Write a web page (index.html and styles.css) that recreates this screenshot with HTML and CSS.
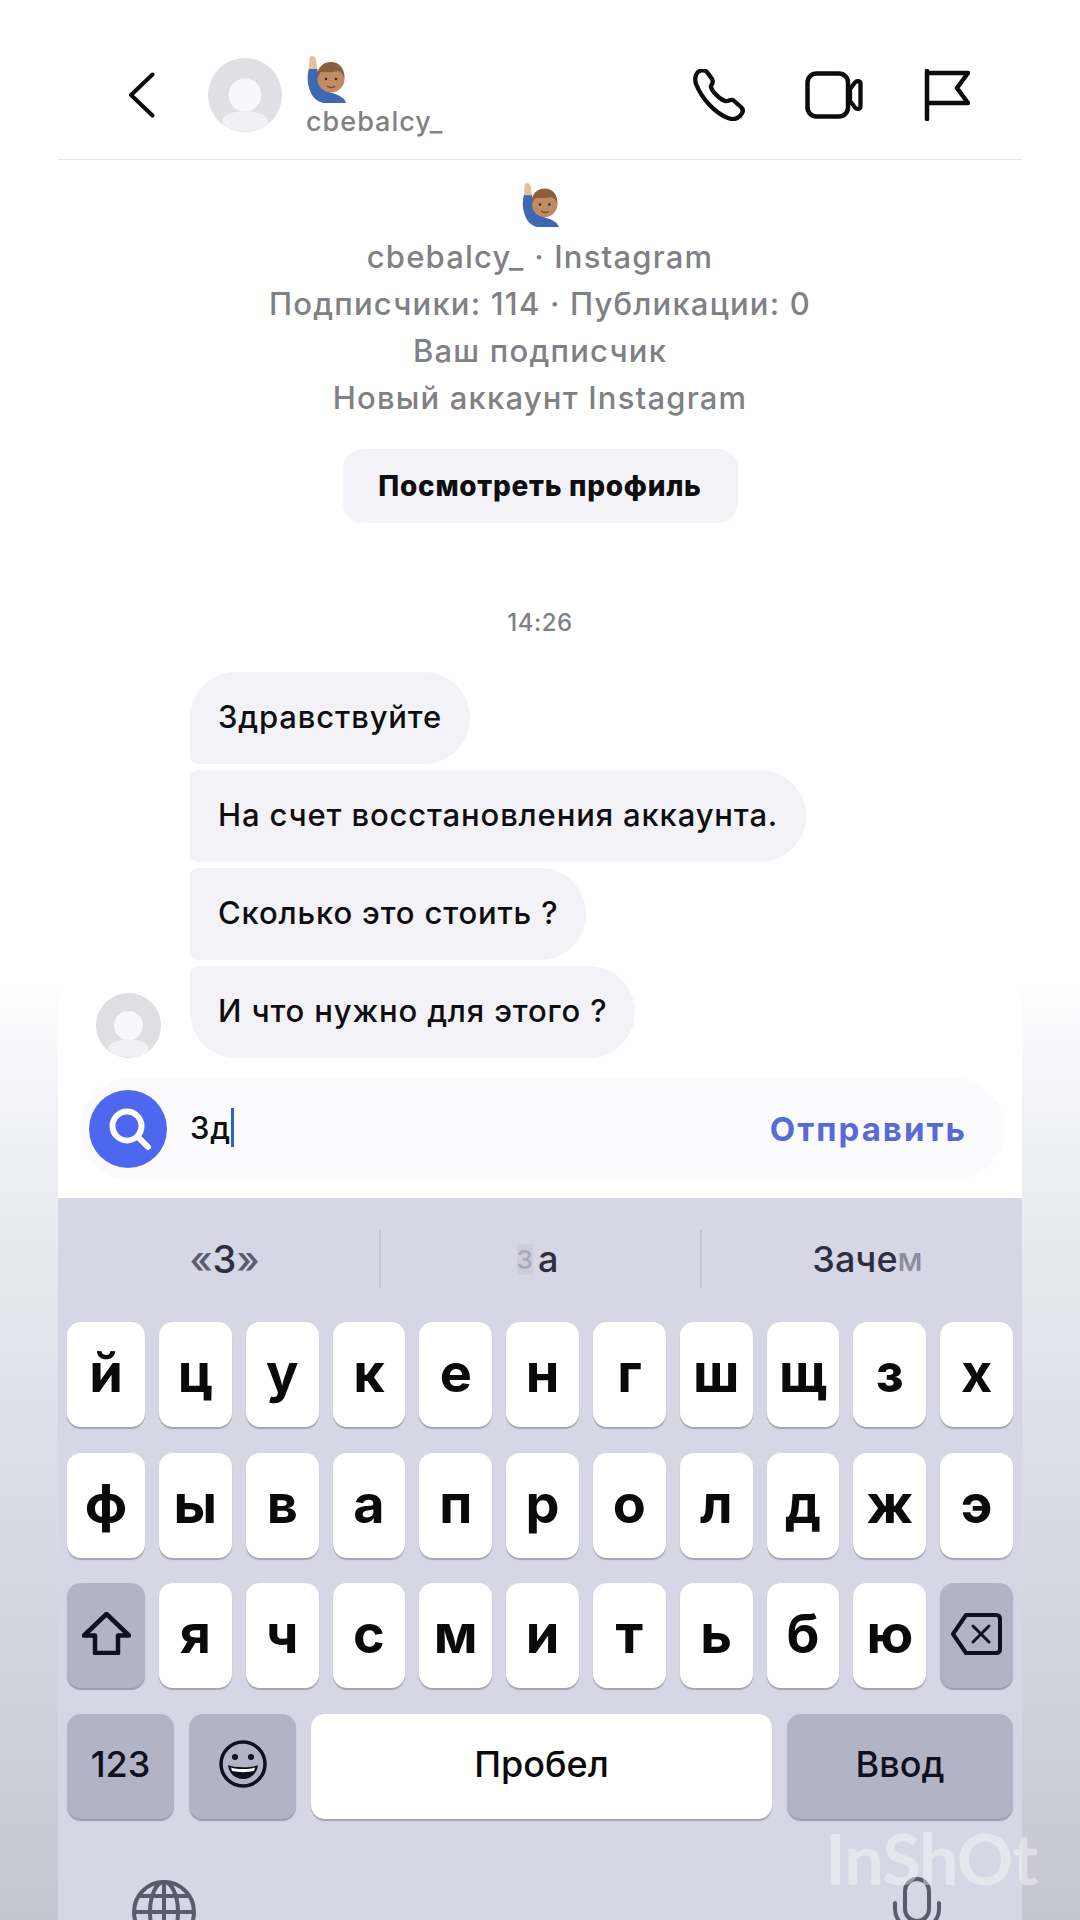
FILE: index.html
```html
<!DOCTYPE html>
<html lang="ru">

<head>
    <meta charset="UTF-8" />
    <meta name="viewport" content="width=device-width, initial-scale=1" />
    <title>cbebalcy_</title>
    <link rel="stylesheet" href="styles.css">
</head>

<body>
    <svg class="sprite" width="0" height="0" aria-hidden="true">
        <symbol id="hand-man" viewBox="0 0 41 48">
            <path d="M3 13C1 20 1 30 5 38C7 43 12 47 18 48H40C39 43 33 40 26 38C20 36 15 30 13 22L11 13Z" fill="#3f68b4" />
            <path d="M3 14L3.500 4C4 1 6 0 7 1.500C9 1 10 4 10.500 7L11 14Z" fill="#e6c096" />
            <circle cx="25" cy="24" r="13.500" fill="#c08c64" />
            <path d="M11.500 24C10 13 17 7 25 7C33 7 39 13 38.500 24C37 19 35 17 32 16C26 18 18 17 15 17C13 19 12.500 21 11.500 24Z" fill="#8a5f3e" />
            <circle cx="20" cy="24" r="1.300" fill="#3c2415" />
            <circle cx="30" cy="24" r="1.300" fill="#3c2415" />
            <path d="M21 31C24 33 27 33 29 31" fill="none" stroke="#6e4328" stroke-width="1.200" />
        </symbol>
    </svg>

    <div class="screen">
        <header class="topbar">
            <svg class="back" width="27" height="46" viewBox="0 0 27 46">
                <path d="M24.500 2.500L3 23L24.500 43.500" fill="none" stroke="#0c0c0c" stroke-width="4" stroke-linecap="round" stroke-linejoin="round" />
            </svg>
            <svg class="avatar" width="74" height="74" viewBox="0 0 74 74">
                <circle cx="37" cy="37" r="37" fill="#dfdfe4" />
                <circle cx="37" cy="37" r="16.500" fill="#f8f8fa" />
                <ellipse cx="37" cy="63" rx="23" ry="10" fill="#f1f1f4" />
            </svg>
            <div class="peer">
                <svg class="emoji" width="41" height="48"><use href="#hand-man" /></svg>
                <div class="peer-name">cbebalcy_</div>
            </div>
            <div class="actions">
                <svg width="52" height="52" viewBox="0 0 52 52">
                    <path d="M3 6C5 1 11 0 14 3L19 10C21 13 19 15 18 17C17 19 24 29 32 32C35 33 37 30 40 31L48 38C51 41 50 44 47 47C44 50 40 51 35 49C22 44 9 30 3 15C2 12 2 9 3 6Z" fill="none" stroke="#0c0c0c" stroke-width="4.300" stroke-linejoin="round" />
                </svg>
                <svg class="video" width="58" height="48" viewBox="0 0 58 48">
                    <rect x="2.500" y="2.500" width="40.500" height="43" rx="9" fill="none" stroke="#0c0c0c" stroke-width="4.500" />
                    <path d="M45 18L50 11.500C52 9 55.500 10 55.500 13V35C55.500 38 52 39 50 36.500L45 30Z" fill="none" stroke="#0c0c0c" stroke-width="4.300" stroke-linejoin="round" />
                </svg>
                <svg width="46" height="52" viewBox="0 0 46 52">
                    <path d="M3 2V50M3 4H44L33 19L44 34H3" fill="none" stroke="#0c0c0c" stroke-width="4.500" stroke-linecap="round" stroke-linejoin="round" />
                </svg>
            </div>
        </header>

        <section class="profile">
            <svg class="emoji" width="39" height="45"><use href="#hand-man" /></svg>
            <div class="profile-lines">
                <div>cbebalcy_ · Instagram</div>
                <div>Подписчики: 114 · Публикации: 0</div>
                <div>Ваш подписчик</div>
                <div>Новый аккаунт Instagram</div>
            </div>
            <div class="profile-btn">Посмотреть профиль</div>
        </section>

        <div class="time">14:26</div>

        <section class="thread">
            <svg class="avatar" width="65" height="65" viewBox="0 0 74 74">
                <circle cx="37" cy="37" r="37" fill="#dfdfe2" />
                <circle cx="37" cy="37" r="16.500" fill="#f8f8fa" />
                <ellipse cx="37" cy="63" rx="23" ry="10" fill="#f1f1f4" />
            </svg>
            <div class="bubbles">
                <div class="bubble first">Здравствуйте</div>
                <div class="bubble">На счет восстановления аккаунта.</div>
                <div class="bubble">Сколько это стоить ?</div>
                <div class="bubble last">И что нужно для этого ?</div>
            </div>
        </section>

        <div class="composer">
            <svg class="search" width="78" height="78" viewBox="0 0 78 78">
                <circle cx="39" cy="39" r="39" fill="#4d68ee" />
                <circle cx="38" cy="36" r="14.500" fill="none" stroke="#fff" stroke-width="6" />
                <path d="M49 47L59 57" stroke="#fff" stroke-width="6" stroke-linecap="round" />
            </svg>
            <div class="draft">Зд<span class="caret"></span></div>
            <div class="send">Отправить</div>
        </div>

        <div class="keyboard">
            <div class="suggestions">
                <div class="suggestion quoted"><span class="dim-quote">«</span>З<span class="dim-quote">»</span></div>
                <div class="suggestion middle"><span class="fade">З</span>а</div>
                <div class="suggestion last-word">Заче<span class="fade-m">м</span></div>
            </div>

            <div class="keys">
                <div class="key-row">
                    <div class="key">й</div>
                    <div class="key">ц</div>
                    <div class="key">у</div>
                    <div class="key">к</div>
                    <div class="key">е</div>
                    <div class="key">н</div>
                    <div class="key">г</div>
                    <div class="key">ш</div>
                    <div class="key">щ</div>
                    <div class="key">з</div>
                    <div class="key">х</div>
                </div>
                <div class="key-row">
                    <div class="key">ф</div>
                    <div class="key">ы</div>
                    <div class="key">в</div>
                    <div class="key">а</div>
                    <div class="key">п</div>
                    <div class="key">р</div>
                    <div class="key">о</div>
                    <div class="key">л</div>
                    <div class="key">д</div>
                    <div class="key">ж</div>
                    <div class="key">э</div>
                </div>
                <div class="key-row">
                    <div class="key fn">
                        <svg width="49" height="43" viewBox="0 0 49 43">
                            <path d="M24.500 2L47 23.500H36V41H13V23.500H2Z" fill="none" stroke="#10101e" stroke-width="4.500" stroke-linejoin="round" />
                        </svg>
                    </div>
                    <div class="key">я</div>
                    <div class="key">ч</div>
                    <div class="key">с</div>
                    <div class="key">м</div>
                    <div class="key">и</div>
                    <div class="key">т</div>
                    <div class="key">ь</div>
                    <div class="key">б</div>
                    <div class="key">ю</div>
                    <div class="key fn">
                        <svg width="51" height="42" viewBox="0 0 51 42">
                            <path d="M15 2H45C47.500 2 49 3.500 49 6V36C49 38.500 47.500 40 45 40H15L2 21Z" fill="none" stroke="#10101e" stroke-width="4" stroke-linejoin="round" />
                            <path d="M22 13L38 29M38 13L22 29" stroke="#10101e" stroke-width="3" stroke-linecap="round" />
                        </svg>
                    </div>
                </div>
                <div class="bottom-row">
                    <div class="key fn wide small">123</div>
                    <div class="key fn wide">
                        <svg width="48" height="48" viewBox="0 0 48 48">
                            <circle cx="24" cy="24" r="22" fill="none" stroke="#10101e" stroke-width="3.500" />
                            <circle cx="16" cy="17" r="3" fill="#10101e" />
                            <circle cx="32" cy="17" r="3" fill="#10101e" />
                            <path d="M9 25C16 28 32 28 39 25C38 34 31 39 24 39C17 39 10 34 9 25Z" fill="#10101e" />
                            <path d="M12 27.500C18 29.500 30 29.500 36 27.500L35 31C28 32.500 20 32.500 13 31Z" fill="#fff" />
                        </svg>
                    </div>
                    <div class="key space small">Пробел</div>
                    <div class="key fn enter small">Ввод</div>
                </div>
            </div>

            <div class="system-row">
                <svg width="64" height="64" viewBox="0 0 64 64">
                    <g fill="none" stroke="#5b5b6b" stroke-width="4">
                        <circle cx="32" cy="32" r="30" />
                        <ellipse cx="32" cy="32" rx="14" ry="30" />
                        <path d="M32 2V62M2 32H62M7 16H57M7 48H57" />
                    </g>
                </svg>
                <svg class="mic" width="48" height="64" viewBox="0 0 48 64">
                    <rect x="12" y="2" width="24" height="42" rx="12" fill="none" stroke="#5b5b6b" stroke-width="4" />
                    <path d="M2 26V32C2 44 12 52 24 52C36 52 46 44 46 32V26" fill="none" stroke="#5b5b6b" stroke-width="4" stroke-linecap="round" />
                </svg>
            </div>
        </div>
    </div>

    <div class="watermark">InShOt</div>
</body>

</html>
```

FILE: styles.css
```css
:root {
    --ink: #0e0e10;
    --muted: #808085;
    --bubble: #f3f3f7;
    --kb: #d6d6e4;
    --kb-fn: #b2b4c6;
    --blue: #5a68d8;
}

html,
body {
    margin: 0;
    height: 1920px;
}

body {
    position: relative;
    overflow: hidden;
    font-family: Inter, "Noto Sans", sans-serif;
    color: var(--ink);
    background: linear-gradient(180deg, #fff 0, #fff 980px, #eeeef6 1150px, #e0e0ea 1400px, #c6c6d0 1920px);
}

.sprite {
    position: absolute;
}

.screen {
    display: flex;
    flex-direction: column;
    height: 1920px;
    margin: 0 58px;
    overflow: hidden;
    background: #fff;
}

.screen > * {
    flex: none;
}

svg {
    display: block;
    flex: none;
}

/* шапка */
.topbar {
    display: flex;
    align-items: center;
    height: 74px;
    padding: 58px 52px 27px 70px;
    border-bottom: 1px solid #e8e8ea;
}

.back {
    margin-right: 53px;
}

.peer {
    align-self: flex-start;
    margin: -3px 0 0 24px;
}

.peer-name {
    margin-top: 3px;
    font-size: 27px;
    line-height: 32px;
    font-weight: 500;
    letter-spacing: 1px;
    color: var(--muted);
}

.actions {
    display: flex;
    align-items: center;
    gap: 60px;
    margin-left: auto;
}

.video {
    margin-right: 1px;
}

/* профиль */
.profile {
    display: flex;
    flex-direction: column;
    align-items: center;
    padding-top: 22px;
}

.profile-lines {
    margin-top: 6px;
    font-size: 31px;
    line-height: 47px;
    font-weight: 500;
    letter-spacing: 1.2px;
    color: var(--muted);
    text-align: center;
}

.profile-btn {
    display: flex;
    align-items: center;
    justify-content: center;
    width: 395px;
    height: 74px;
    margin-top: 28px;
    border-radius: 20px;
    background: var(--bubble);
    font-size: 28px;
    font-weight: 800;
    letter-spacing: 0.7px;
}

.time {
    margin-top: 86px;
    font-size: 24px;
    line-height: 28px;
    font-weight: 500;
    letter-spacing: 0.5px;
    color: var(--muted);
    text-align: center;
}

/* сообщения */
.thread {
    display: flex;
    align-items: flex-end;
    gap: 29px;
    margin-top: 35px;
    padding-left: 38px;
}

.bubbles {
    display: flex;
    flex-direction: column;
    align-items: flex-start;
    gap: 6px;
}

.bubble {
    display: flex;
    align-items: center;
    box-sizing: border-box;
    height: 92px;
    padding: 0 28px 4px;
    border-radius: 8px 46px 46px 8px;
    background: var(--bubble);
    font-size: 31px;
    font-weight: 550;
    letter-spacing: 0.85px;
}

.bubble.first {
    border-top-left-radius: 46px;
}

.bubble.last {
    border-bottom-left-radius: 46px;
}

/* поле ввода */
.composer {
    display: flex;
    align-items: center;
    height: 102px;
    margin: 20px 17px 18px 22px;
    padding: 0 38px 0 9px;
    border-radius: 51px;
    background: #fbfbfe;
}

.draft {
    display: flex;
    align-items: center;
    margin: 0 0 4px 23px;
    font-size: 31px;
    font-weight: 550;
    letter-spacing: 0.85px;
}

.caret {
    width: 3px;
    height: 39px;
    background: #2a63d8;
}

.send {
    margin-left: auto;
    font-size: 33px;
    font-weight: 700;
    letter-spacing: 2px;
    color: var(--blue);
}

/* клавиатура */
.keyboard {
    padding: 32px 9px 0;
    background: var(--kb);
}

.suggestions {
    display: flex;
    height: 58px;
    margin: 0 -9px 34px;
}

.suggestion {
    display: flex;
    align-items: center;
    justify-content: center;
    box-sizing: border-box;
    width: 321px;
    border-left: 2px solid #c4c4d4;
    font-size: 36px;
    font-weight: 500;
    color: #2e2e40;
}

.suggestion:first-child {
    border-left: 0;
}

.quoted {
    padding-left: 12px;
    font-size: 38px;
}

.middle {
    padding-right: 6px;
}

.last-word {
    padding-left: 12px;
}

.dim-quote {
    color: #5c5c6e;
}

.fade {
    margin-right: 5px;
    color: #a8a8b8;
    background: #cdcddb;
    font-size: 26px;
}

.fade-m {
    color: #8c8c9c;
    font-size: 32px;
}

.keys {
    display: flex;
    flex-direction: column;
    gap: 25.500px;
}

.key-row {
    display: grid;
    grid-template-columns: 78px repeat(10, 1fr);
    column-gap: 14px;
}

.bottom-row {
    display: flex;
    gap: 15px;
}

.key {
    display: flex;
    align-items: center;
    justify-content: center;
    box-sizing: border-box;
    height: 105px;
    padding-bottom: 4px;
    border-radius: 14px;
    background: #fff;
    box-shadow: 0 2px 1px #a4a4b4;
    font-size: 54px;
    font-weight: 700;
    color: #0a0a0a;
}

.key.fn {
    background: var(--kb-fn);
    box-shadow: 0 2px 1px #9a9cae;
    color: #10101e;
}

.key.small {
    font-size: 36px;
    font-weight: 500;
}

.key.wide {
    width: 107px;
}

.key.space {
    flex: 1;
}

.key.enter {
    width: 226px;
}

.system-row {
    display: flex;
    justify-content: space-between;
    margin-top: 61px;
    padding: 0 72px 0 65px;
}

.mic {
    margin-top: -3px;
}

.watermark {
    position: absolute;
    left: 825px;
    top: 1816px;
    font-family: Lato, sans-serif;
    font-size: 70px;
    line-height: 84px;
    font-weight: 700;
    letter-spacing: -1px;
    color: rgba(255, 255, 255, 0.4);
}
```
